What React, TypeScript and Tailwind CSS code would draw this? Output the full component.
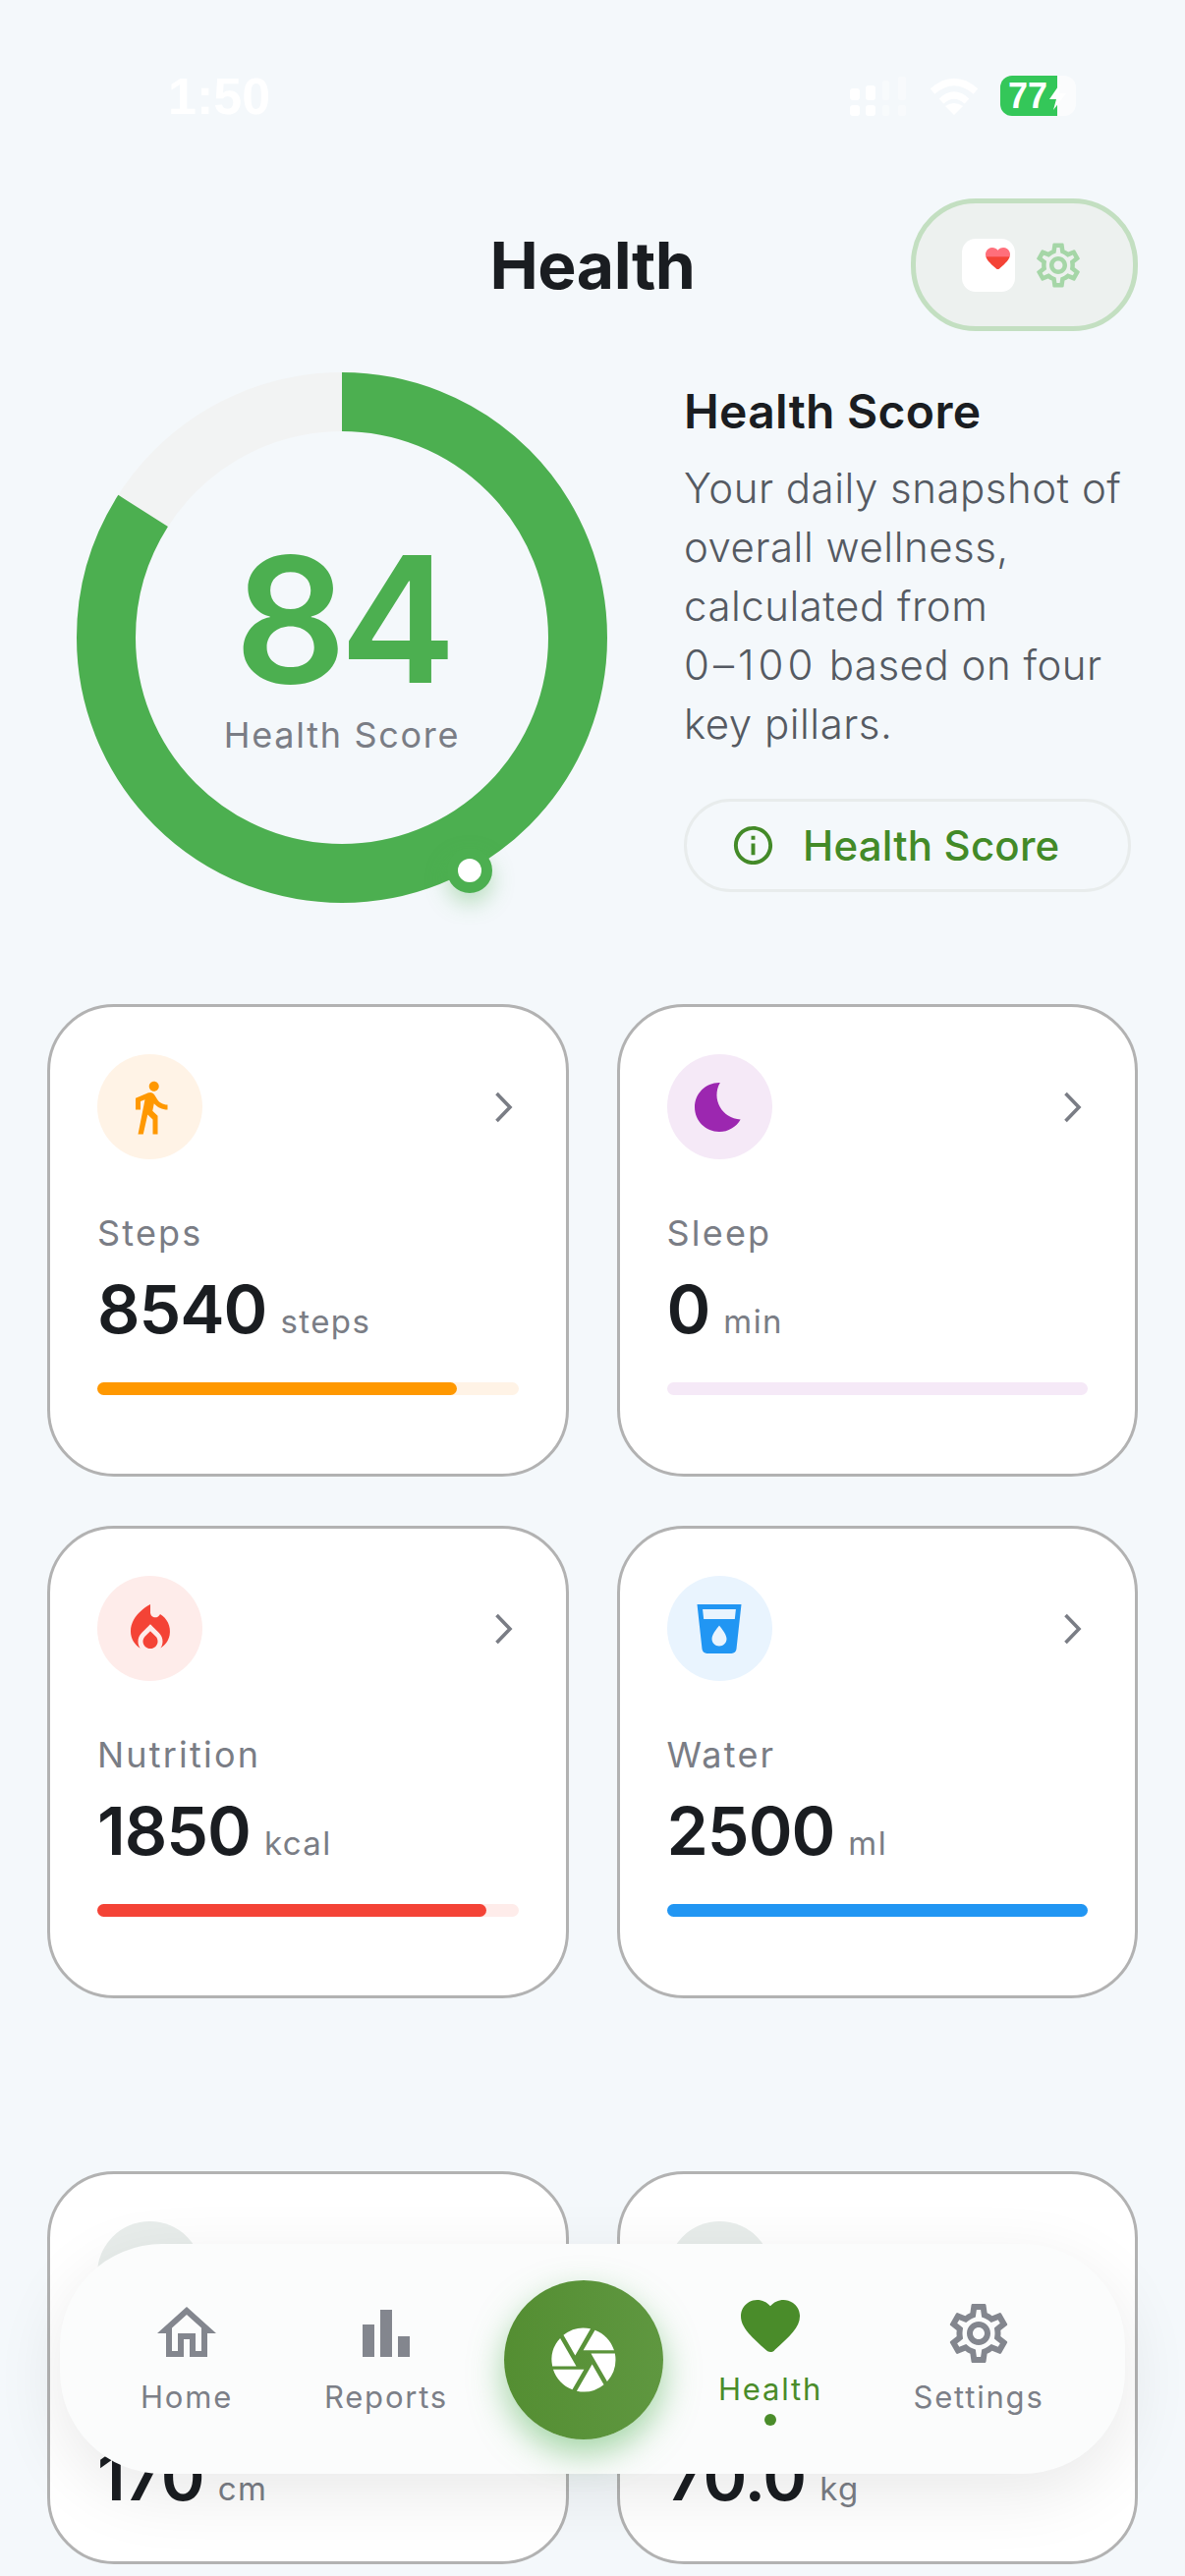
import React from "react";
import {
  MdDirectionsWalk,
  MdBedtime,
  MdLocalFireDepartment,
  MdLocalDrink,
  MdInfoOutline,
  MdOutlineHome,
  MdOutlineBarChart,
  MdOutlineSettings,
  MdCamera,
} from "react-icons/md";

const HEART =
  "M13.35 20.130c-.76.690-1.930.690-2.690-.010l-.110-.100C5.300 15.270 1.870 12.160 2 8.280c.060-1.700.930-3.330 2.340-4.290 2.640-1.800 5.900-.960 7.660 1.100 1.760-2.060 5.020-2.910 7.660-1.100 1.410.960 2.280 2.590 2.340 4.290.140 3.880-3.300 6.990-8.550 11.760l-.100.090z";

const Chevron = () => (
  <svg width="20" height="32" viewBox="0 0 20 32" fill="none" stroke="#7a7d85" strokeWidth="3.6">
    <polyline points="3.5,2 17,16 3.5,30" />
  </svg>
);

function Card({
  icon,
  circle,
  label,
  value,
  unit,
  bar,
  track,
  pct,
  tall,
}: {
  icon?: React.ReactNode;
  circle: string;
  label: string;
  value: string;
  unit: string;
  bar?: string;
  track?: string;
  pct?: number;
  tall?: boolean;
}) {
  return (
    <div
      className={`flex flex-col rounded-[68px] border-[3px] border-[#b2b2b2] bg-white px-[48px] pt-[48px] ${
        tall ? "h-[481px]" : "h-[400px]"
      }`}
    >
      <div className="flex items-center justify-between pr-[6px]">
        <div className={`flex h-[107px] w-[107px] items-center justify-center rounded-full ${circle}`}>{icon}</div>
        <Chevron />
      </div>
      <div className="mt-[53px] text-[36px] leading-[44px] tracking-[2.2px] text-[#7a7d85]">{label}</div>
      <div className="mt-[14px] flex items-baseline gap-[14px] leading-[82px]">
        <span className="text-[68px] font-semibold tracking-[-1px] text-[#1a1d21]">{value}</span>
        <span className="text-[33px] tracking-[1.4px] text-[#7a7d85]">{unit}</span>
      </div>
      {bar && (
        <div className={`mt-[21px] h-[13px] w-full rounded-full ${track}`}>
          <div className={`h-full rounded-full ${bar}`} style={{ width: `${pct}%` }} />
        </div>
      )}
    </div>
  );
}

function NavItem({
  icon,
  label,
  active,
  className,
}: {
  icon: React.ReactNode;
  label: string;
  active?: boolean;
  className: string;
}) {
  return (
    <div className={`flex w-[200px] shrink-0 flex-col items-center ${active ? "text-[#4a8c2a]" : "text-[#7c7f87]"} ${className}`}>
      {icon}
      <span className={`text-[31px] leading-[38px] tracking-[1.8px] ${active ? "mt-[9px]" : "mt-[10px]"}`}>{label}</span>
      {active && <span className="mt-[6px] h-[12px] w-[12px] rounded-full bg-[#4a8c2a]" />}
    </div>
  );
}

export default function App() {
  const C = 2 * Math.PI * 240;
  return (
    <div
      className="relative h-[2622px] w-[1206px] overflow-hidden bg-[#f4f8fb]"
      style={{ fontFamily: "Inter, 'Noto Sans', sans-serif" }}
    >
      {/* Status bar */}
      <div className="flex h-[130px] items-start justify-between pl-[171px] pr-[130px] pt-[77px]">
        <span
          className="mt-[-5px] text-[52px] font-bold leading-[52px] text-white"
          style={{ fontFamily: "'Liberation Sans', sans-serif" }}
        >
          1:50
        </span>
        <div className="flex items-start">
          <svg className="mt-[1px]" width="58" height="40" viewBox="0 0 58 40" fill="#ffffff">
            <rect x="0" y="12" width="10" height="12" rx="3" />
            <rect x="0" y="29" width="10" height="11" rx="3" />
            <rect x="16" y="9" width="10" height="15" rx="3" />
            <rect x="16" y="29" width="10" height="11" rx="3" />
            <rect x="33" y="4" width="7" height="20" rx="2" opacity="0.4" />
            <rect x="33" y="29" width="7" height="11" rx="2" opacity="0.4" />
            <rect x="49" y="0" width="8" height="24" rx="2" opacity="0.35" />
            <rect x="49" y="29" width="8" height="11" rx="2" opacity="0.35" />
          </svg>
          <svg className="ml-[23px] mt-[2px]" width="50" height="38" viewBox="0 0 50 38" fill="none">
            <path d="M3 14Q25 -5 47 14" stroke="#ffffff" strokeWidth="7" />
            <path d="M12 24Q25 12 38 24" stroke="#ffffff" strokeWidth="7" />
            <path d="M25 38L16 29Q25 23 34 29Z" fill="#ffffff" />
          </svg>
          <div className="relative ml-[22px] flex h-[41px] w-[58px] items-center rounded-l-[12px] bg-[#34c759] pl-[8px]">
            <span
              className="text-[36px] font-bold leading-[41px] text-white"
              style={{ fontFamily: "'Liberation Sans', sans-serif" }}
            >
              77
            </span>
            <div className="absolute left-[58px] top-0 h-[41px] w-[19px] rounded-r-[12px] bg-white/60" />
            <svg className="absolute left-[50px] top-[8px]" width="18" height="27" viewBox="0 0 18 27" fill="#ffffff">
              <path d="M11 0L0 16h7l-3 11L17 10h-7z" />
            </svg>
          </div>
        </div>
      </div>

      {/* Header */}
      <div className="relative mt-[72px] flex h-[135px] items-center justify-center">
        <h1 className="text-[66px] font-bold leading-[80px] tracking-[-0.5px] text-[#1a1d21]">Health</h1>
        <div className="absolute right-[48px] top-0 flex h-[135px] w-[231px] items-center rounded-[66px] border-[5px] border-[#c3dfc1] bg-[#edf1ef] pl-[47px]">
          <div className="flex h-[54px] w-[54px] items-start justify-center rounded-[14px] bg-white pl-[18px] pt-[9px]">
            <svg width="25" height="22" viewBox="2 3 20 17.500" className="shrink-0">
              <defs>
                <linearGradient id="hg" x1="0" y1="0" x2="0" y2="1">
                  <stop offset="0.4" stopColor="#ff6f7b" />
                  <stop offset="0.44" stopColor="#f44336" />
                </linearGradient>
              </defs>
              <path fill="url(#hg)" d={HEART} />
            </svg>
          </div>
          <MdOutlineSettings className="ml-[17px] text-[#a5d6a7]" size={54} />
        </div>
      </div>

      {/* Score section */}
      <div className="mt-[42px] flex items-start pl-[78px] pr-[54px]">
        <div className="relative h-[540px] w-[540px] shrink-0">
          <svg width="540" height="540" viewBox="0 0 540 540" fill="none">
            <circle cx="270" cy="270" r="240" stroke="#f2f3f3" strokeWidth="60" />
            <circle
              cx="270"
              cy="270"
              r="240"
              stroke="#4caf50"
              strokeWidth="60"
              strokeDasharray={`${C * 0.84} ${C}`}
              transform="rotate(-90 270 270)"
            />
          </svg>
          <div className="absolute inset-0 flex flex-col items-center pt-[157px]">
            <span className="text-[178px] font-semibold leading-[190px] tracking-[-7px] text-[#4caf50]">84</span>
            <span className="text-[36px] leading-[44px] tracking-[1.7px] text-[#7a7d85]">Health Score</span>
          </div>
          <div className="absolute left-[377px] top-[484px] h-[46px] w-[46px] rounded-full border-[11px] border-[#4caf50] bg-white shadow-[0_10px_22px_rgba(76,175,80,0.35)]" />
        </div>
        <div className="ml-[78px] flex-1">
          <h2 className="mt-[12px] text-[48px] font-semibold leading-[56px] tracking-[0.3px] text-[#1a1d21]">Health Score</h2>
          <p className="mt-[20px] text-[42px] font-light leading-[60px] tracking-[0.5px] text-[#555a62]">
            Your daily snapshot of
            <br />
            overall wellness,
            <br />
            calculated from
            <br />
            <span className="tracking-[4px]">0–100</span> based on four
            <br />
            key pillars.
          </p>
          <div className="mt-[46px] flex h-[95px] w-[455px] items-center rounded-full border-[3px] border-[#e8ecec] pl-[44px] text-[#438a28]">
            <MdInfoOutline size={47} />
            <span className="ml-[27px] text-[42px] font-medium leading-[50px] tracking-[0.2px]">Health Score</span>
          </div>
        </div>
      </div>

      {/* Cards */}
      <div className="mt-[103px] grid grid-cols-2 gap-x-[49px] gap-y-[50px] px-[48px]">
        <Card
          tall
          icon={<MdDirectionsWalk size={60} color="#ff9800" />}
          circle="bg-[#fff3e6]"
          label="Steps"
          value="8540"
          unit="steps"
          bar="bg-[#ff9800]"
          track="bg-[#fff3e6]"
          pct={85.4}
        />
        <Card
          tall
          icon={<MdBedtime size={60} color="#9c27b0" />}
          circle="bg-[#f5e9f7]"
          label="Sleep"
          value="0"
          unit="min"
          bar="bg-[#9c27b0]"
          track="bg-[#f5e9f7]"
          pct={0}
        />
        <Card
          tall
          icon={<MdLocalFireDepartment size={60} color="#f44336" />}
          circle="bg-[#feecea]"
          label="Nutrition"
          value="1850"
          unit="kcal"
          bar="bg-[#f44336]"
          track="bg-[#feecea]"
          pct={92.5}
        />
        <Card
          tall
          icon={<MdLocalDrink size={60} color="#2196f3" />}
          circle="bg-[#e9f4fe]"
          label="Water"
          value="2500"
          unit="ml"
          bar="bg-[#2196f3]"
          track="bg-[#e9f4fe]"
          pct={100}
        />
      </div>
      <div className="mt-[176px] grid grid-cols-2 gap-x-[49px] px-[48px]">
        <Card circle="bg-[#e8edeb]" label="Height" value="170" unit="cm" />
        <Card circle="bg-[#e8edeb]" label="Weight" value="70.0" unit="kg" />
      </div>

      {/* Bottom nav */}
      <div className="absolute left-[61px] top-[2284px] flex h-[234px] w-[1084px] items-start rounded-[104px] bg-[#fbfcfc] pl-[29px] shadow-[0_20px_70px_rgba(0,0,0,0.09)]">
        <NavItem className="mt-[55px]" icon={<MdOutlineHome size={72} color="#83868e" />} label="Home" />
        <NavItem className="ml-[3px] mt-[55px]" icon={<MdOutlineBarChart size={72} color="#83868e" />} label="Reports" />
        <div className="ml-[20px] mt-[37px] flex h-[162px] w-[162px] shrink-0 items-center justify-center rounded-full bg-gradient-to-r from-[#548e32] to-[#5f9740] shadow-[0_14px_34px_rgba(76,175,80,0.5)]">
          <MdCamera size={78} color="#ffffff" />
        </div>
        <NavItem
          className="ml-[9px] mt-[48px]"
          active
          icon={
            <svg width="72" height="72" viewBox="0 0 24 24" fill="currentColor">
              <path d={HEART} />
            </svg>
          }
          label="Health"
        />
        <NavItem className="ml-[12px] mt-[55px]" icon={<MdOutlineSettings size={72} color="#83868e" />} label="Settings" />
      </div>
    </div>
  );
}
